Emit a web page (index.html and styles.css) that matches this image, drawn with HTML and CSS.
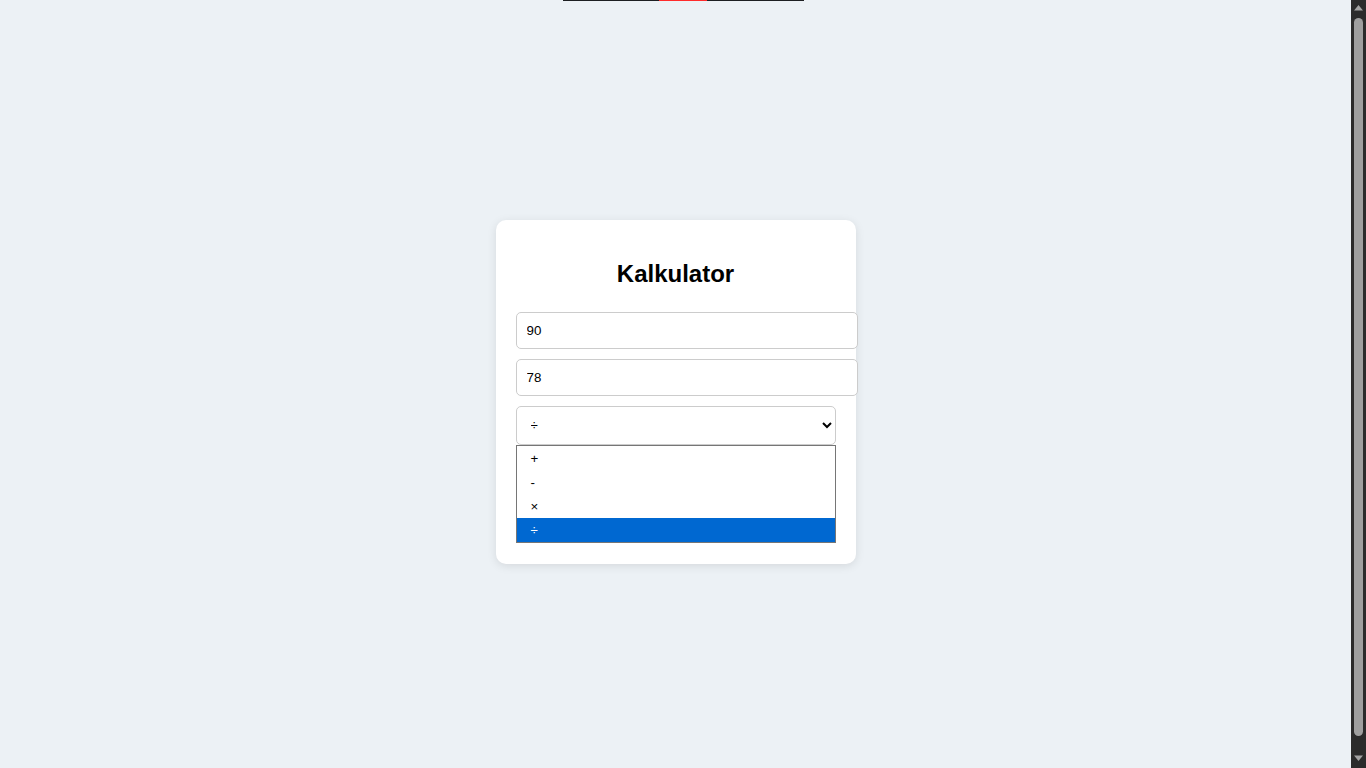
FILE: index.html
```html
<!DOCTYPE html>
<html lang="id">
<head>
<meta charset="utf-8">
<title>Kalkulator</title>
<link rel="stylesheet" href="styles.css">
</head>
<body>
<div class="topline"><span class="seg dark1"></span><span class="seg red"></span><span class="seg dark2"></span></div>
<div class="card">
  <h2 class="title">Kalkulator</h2>
  <div class="fields">
    <input class="field" type="number" value="90">
    <input class="field" type="number" value="78">
    <div class="select-wrap">
      <select class="op">
        <option>+</option>
        <option>-</option>
        <option>×</option>
        <option selected>÷</option>
      </select>
      <ul class="dropdown">
        <li class="opt">+</li>
        <li class="opt">-</li>
        <li class="opt">×</li>
        <li class="opt active">÷</li>
      </ul>
    </div>
  </div>
</div>
<div class="scrollbar">
  <svg class="arrow up" width="9" height="6" viewBox="0 0 9 6"><polygon points="4.5,0 9,5.5 0,5.5" fill="#a3a3a3"/></svg>
  <div class="thumb"></div>
  <svg class="arrow down" width="9" height="6" viewBox="0 0 9 6"><polygon points="0,0.5 9,0.5 4.5,6" fill="#a3a3a3"/></svg>
</div>
</body>
</html>
```
FILE: styles.css
```css
html {
  overflow: hidden;
}
body {
  margin: 8px 23px 8px 8px;
  height: 100vh;
  display: flex;
  align-items: center;
  justify-content: center;
  background: #ecf1f5;
  font-family: "Liberation Sans", Arial, sans-serif;
  color: #000;
}
.topline {
  position: absolute;
  top: 0;
  left: 563px;
  width: 241px;
  height: 1px;
  display: flex;
}
.seg { display: block; height: 1px; }
.dark1 { width: 96px; background: #1d1f22; }
.red { width: 48px; background: #ff2b2b; }
.dark2 { width: 97px; background: #1d1f22; }

.scrollbar {
  position: fixed;
  top: 0;
  right: 0;
  width: 15px;
  height: 100vh;
  background: #2b2b2b;
  display: flex;
  flex-direction: column;
  align-items: center;
}
.arrow { display: block; flex: none; }
.arrow.up { margin-top: 5px; }
.arrow.down { margin-top: auto; margin-bottom: 7px; }
.thumb {
  width: 9px;
  height: 718px;
  margin-top: 7px;
  border-radius: 5px;
  background: #9f9f9f;
}

.card {
  width: 320px;
  padding: 20px;
  background: #fff;
  border-radius: 10px;
  box-shadow: 0 2px 10px rgba(0, 0, 0, 0.1);
}
.title {
  margin: 20px 0 20px;
  font-size: 24px;
  font-weight: bold;
  text-align: center;
  line-height: normal;
}
.fields {
  display: flex;
  flex-direction: column;
  gap: 10px;
  padding-top: 3.5px;
  padding-bottom: 99.5px;
}
.field {
  width: 100%;
  align-self: flex-start;
  padding: 10px;
  margin: 0;
  border: 1px solid #ccc;
  border-radius: 5px;
  font-family: "Liberation Sans", Arial, sans-serif;
  font-size: 13.333px;
  line-height: 15px;
  height: 15px;
  color: #000;
  background: #fff;
  -moz-appearance: textfield;
}
.field::-webkit-inner-spin-button,
.field::-webkit-outer-spin-button { -webkit-appearance: none; margin: 0; }
.select-wrap {
  position: relative;
}
.op {
  display: block;
  width: 100%;
  height: 39px;
  padding: 10px;
  margin: 0;
  border: 1px solid #ccc;
  border-radius: 5px;
  font-family: "Liberation Sans", Arial, sans-serif;
  font-size: 13.333px;
  color: #000;
  background: #fff;
}
.dropdown {
  position: absolute;
  top: 39px;
  left: 0;
  width: 320px;
  box-sizing: border-box;
  margin: 0;
  padding: 0;
  list-style: none;
  border: 1px solid #767676;
  background: #fff;
  z-index: 2;
}
.opt {
  height: 23px;
  padding-top: 1px;
  line-height: 24px;
  padding-left: 14px;
  font-size: 13.333px;
  color: #000;
  overflow: hidden;
}
.opt.active {
  background: #0068d1;
  color: #fff;
}
```
